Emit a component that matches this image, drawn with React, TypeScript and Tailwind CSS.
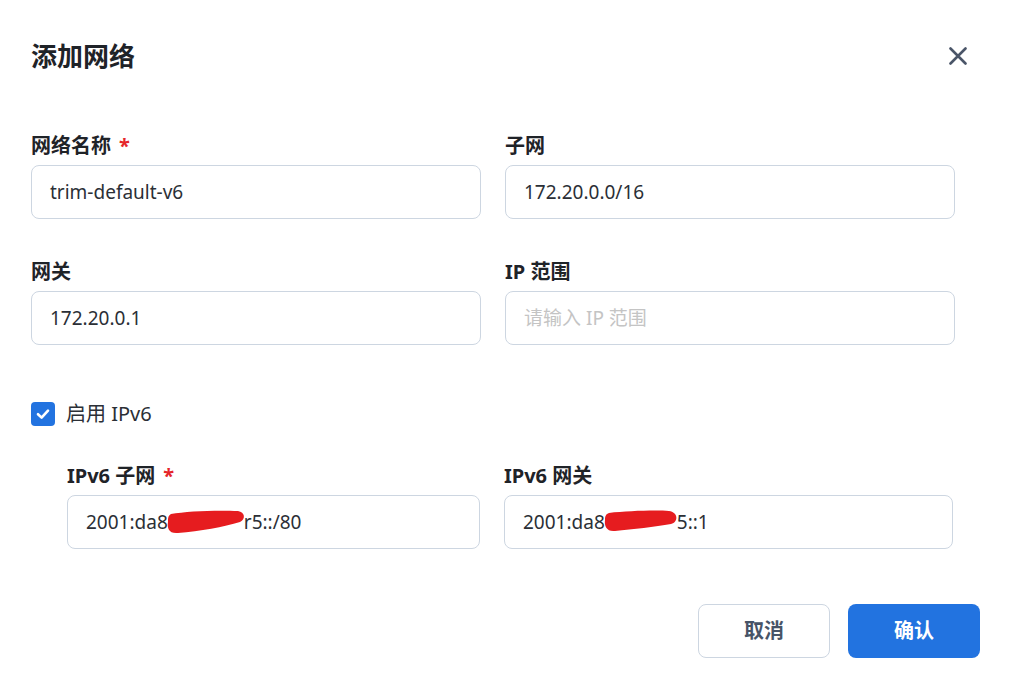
import React from "react";

const font = "font-['Noto_Sans','Noto_Sans_CJK_SC',sans-serif]";

interface FieldProps {
  label: React.ReactNode;
  required?: boolean;
  children: React.ReactNode;
}

const Field = ({ label, required, children }: FieldProps) => (
  <div className="flex flex-col">
    <div className="h-[28px] leading-[28px] text-[20px] font-bold text-[#1f2328] mb-[5px]">
      {label}
      {required && <span className="ml-[8px] text-[#e5252a]">*</span>}
    </div>
    <div className="h-[54px] rounded-[8px] border border-[#cdd6e1] bg-white px-[18px] flex items-center text-[19px] text-[#2b2f36] whitespace-nowrap">
      {children}
    </div>
  </div>
);

const Scribble = ({ w, d }: { w: number; d: string }) => (
  <svg
    width={w}
    height="26"
    viewBox={`0 0 ${w} 26`}
    className="inline-block align-middle -mx-[2px]"
  >
    <path d={d} fill="#e61c1f" />
  </svg>
);

export default function App() {
  return (
    <div className={`${font} w-[1011px] h-[685px] bg-white relative overflow-hidden`}>
      <div className="pt-[38px] pl-[31px] pr-[44px] flex items-center justify-between h-[74px]">
        <h1 className="text-[26px] font-bold text-[#1f2328] leading-[36px]">添加网络</h1>
        <button className="w-[18px] h-[18px] flex items-center justify-center">
          <svg width="18" height="18" viewBox="0 0 18 18">
            <path
              d="M1.5 1.5 L16.5 16.5 M16.5 1.5 L1.5 16.5"
              stroke="#4a5568"
              strokeWidth="2.6"
              strokeLinecap="round"
            />
          </svg>
        </button>
      </div>

      <div className="pl-[31px] pr-[56px] mt-[58px]">
        <div className="grid grid-cols-2 gap-x-[24px] gap-y-[39px]">
          <Field label="网络名称" required>
            trim-default-v6
          </Field>
          <Field label="子网">172.20.0.0/16</Field>
          <Field label="网关">172.20.0.1</Field>
          <Field label="IP 范围">
            <span className="text-[#c4c4c4]">请输入 IP 范围</span>
          </Field>
        </div>

        <label className="mt-[55px] h-[28px] flex items-center gap-[11px]">
          <span className="w-[24px] h-[24px] rounded-[4px] bg-[#2273e0] flex items-center justify-center">
            <svg width="16" height="16" viewBox="0 0 16 16">
              <path
                d="M3 8.2 L6.6 11.6 L13 4.6"
                stroke="white"
                strokeWidth="2.6"
                fill="none"
                strokeLinecap="round"
                strokeLinejoin="round"
              />
            </svg>
          </span>
          <span className="text-[20px] text-[#2b2f36]">启用 IPv6</span>
        </label>

        <div className="mt-[34px] grid grid-cols-2 gap-x-[24px] pr-[2px]">
          <div className="pl-[36px]">
            <Field label="IPv6 子网" required>
              2001:da8
              <Scribble
                w={80}
                d="M5 5 C20 2 52 1 72 2 C79 3 80 10 74 13 C58 18 34 22 12 24 C3 25 1 19 2 13 C2 9 2 7 5 5 Z"
              />
              r5::/80
            </Field>
          </div>
          <Field label="IPv6 网关">
            2001:da8
            <Scribble
              w={76}
              d="M6 4 C24 2 52 1 66 2 C75 3 76 13 68 15 C52 18 30 20 12 22 C4 23 1 17 2 11 C2 7 3 5 6 4 Z"
            />
            5::1
          </Field>
        </div>
      </div>

      <div className="mt-[55px] pr-[31px] flex justify-end gap-[18px]">
        <button className="w-[132px] h-[54px] rounded-[8px] border border-[#cdd6e1] bg-white text-[20px] font-bold text-[#475467]">
          取消
        </button>
        <button className="w-[132px] h-[54px] rounded-[8px] bg-[#2273e0] text-[20px] font-bold text-white">
          确认
        </button>
      </div>
    </div>
  );
}
